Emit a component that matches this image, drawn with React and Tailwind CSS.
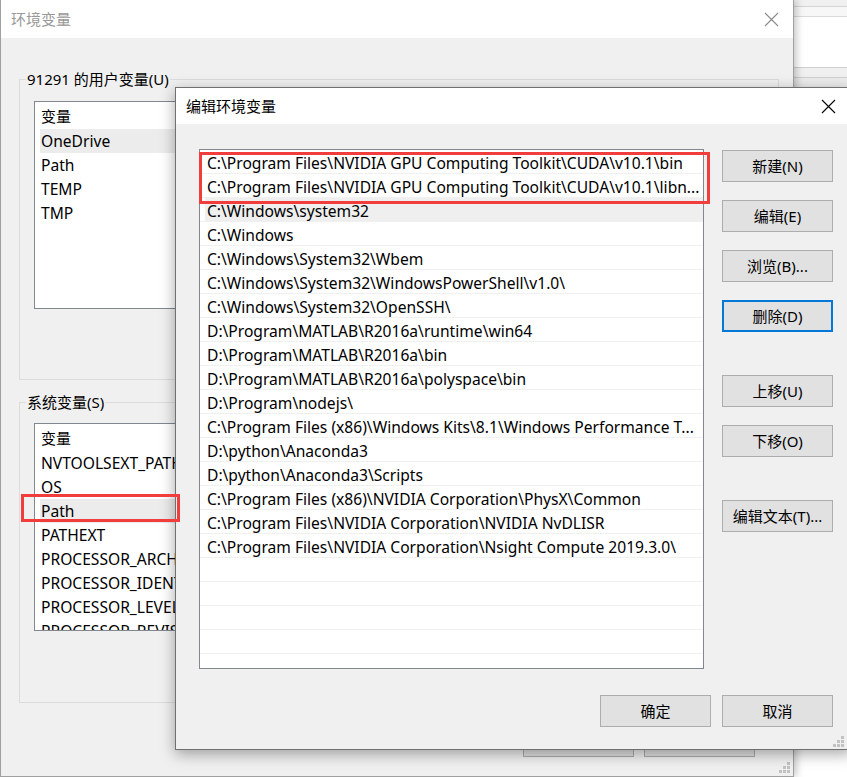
import React from "react";

// 环境变量 / 编辑环境变量 — two stacked Windows dialogs

const USER_VARS = ["OneDrive", "Path", "TEMP", "TMP"];
const SYS_VARS = [
  "NVTOOLSEXT_PATH",
  "OS",
  "Path",
  "PATHEXT",
  "PROCESSOR_ARCHITECTURE",
  "PROCESSOR_IDENTIFIER",
  "PROCESSOR_LEVEL",
  "PROCESSOR_REVISION",
];

const PATHS = [
  "C:\\Program Files\\NVIDIA GPU Computing Toolkit\\CUDA\\v10.1\\bin",
  "C:\\Program Files\\NVIDIA GPU Computing Toolkit\\CUDA\\v10.1\\libn...",
  "C:\\Windows\\system32",
  "C:\\Windows",
  "C:\\Windows\\System32\\Wbem",
  "C:\\Windows\\System32\\WindowsPowerShell\\v1.0\\",
  "C:\\Windows\\System32\\OpenSSH\\",
  "D:\\Program\\MATLAB\\R2016a\\runtime\\win64",
  "D:\\Program\\MATLAB\\R2016a\\bin",
  "D:\\Program\\MATLAB\\R2016a\\polyspace\\bin",
  "D:\\Program\\nodejs\\",
  "C:\\Program Files (x86)\\Windows Kits\\8.1\\Windows Performance T...",
  "D:\\python\\Anaconda3",
  "D:\\python\\Anaconda3\\Scripts",
  "C:\\Program Files (x86)\\NVIDIA Corporation\\PhysX\\Common",
  "C:\\Program Files\\NVIDIA Corporation\\NVIDIA NvDLISR",
  "C:\\Program Files\\NVIDIA Corporation\\Nsight Compute 2019.3.0\\",
  "",
  "",
  "",
  "",
];

function CloseIcon({ color = "#000" }) {
  return (
    <svg width="15" height="15" viewBox="0 0 15 15">
      <path d="M1 1L14 14M14 1L1 14" stroke={color} strokeWidth="1.1" fill="none" />
    </svg>
  );
}

function Grip() {
  const dots = [
    [8, 0],
    [4, 4],
    [8, 4],
    [0, 8],
    [4, 8],
    [8, 8],
  ];
  return (
    <svg width="11" height="11" viewBox="0 0 11 11">
      {dots.map(([x, y]) => (
        <rect key={`${x}-${y}`} x={x} y={y} width="3" height="3" fill="#c2c2c2" />
      ))}
    </svg>
  );
}

function WinButton({ children, focused = false, className = "" }) {
  return (
    <div
      className={`w-[111px] h-[32px] flex items-center justify-center bg-[#e1e1e1] text-[15px] text-black ${
        focused ? "border-2 border-[#0078d7]" : "border border-[#adadad]"
      } ${className}`}
    >
      {children}
    </div>
  );
}

function VarList({ items, selected }) {
  return (
    <div className="w-[729px] h-[208px] bg-white border border-[#828790] overflow-hidden">
      <div className="h-[27px] flex items-center pl-[6px] pt-[1px] text-[15px]">变量</div>
      {items.map((name) => (
        <div
          key={name}
          className={`h-[24px] ml-[5px] pl-[1px] pt-[2px] flex items-center text-[15.6px] whitespace-nowrap ${
            name === selected ? "bg-[#ececec]" : ""
          }`}
        >
          {name}
        </div>
      ))}
    </div>
  );
}

function GroupBox({ label, children, className = "" }) {
  return (
    <div className={`relative ml-[18px] w-[760px] h-[301px] border border-[#dcdcdc] ${className}`}>
      <span className="absolute left-[6px] -top-[11px] px-[1px] bg-[#f0f0f0] text-[15px] leading-[20px] whitespace-nowrap">
        {label}
      </span>
      {children}
    </div>
  );
}

function BackWindow() {
  return (
    <div className="absolute left-0 top-0 w-[794px] h-[777px] flex flex-col border-l border-r border-b border-[#a0a0a0] shadow-[2px_0_8px_rgba(0,0,0,0.25)]">
      <div className="h-[38px] bg-white flex items-center justify-between pl-[10px] pr-[14px] shrink-0">
        <span className="text-[15px] text-[#999]">环境变量</span>
        <CloseIcon color="#8a8a8a" />
      </div>
      <div className="relative flex-1 bg-[#f0f0f0] flex flex-col">
        <GroupBox label="91291 的用户变量(U)" className="mt-[41px]">
          <div className="ml-[14px] mt-[21px]">
            <VarList items={USER_VARS} selected="OneDrive" />
          </div>
        </GroupBox>
        <GroupBox label="系统变量(S)" className="mt-[22px]">
          <div className="ml-[14px] mt-[20px]">
            <VarList items={SYS_VARS} selected="Path" />
          </div>
        </GroupBox>
        <div className="flex gap-[10px] ml-[522px] mt-[22px]">
          <WinButton>确定</WinButton>
          <WinButton>取消</WinButton>
        </div>
        <div className="absolute right-[3px] bottom-[3px]">
          <Grip />
        </div>
      </div>
    </div>
  );
}

function EditDialog() {
  return (
    <div className="absolute left-[175px] top-[87px] w-[677px] h-[663px] flex flex-col border border-[#707070] shadow-[0_4px_14px_rgba(0,0,0,0.35)]">
      <div className="h-[36px] bg-white flex items-center justify-between pl-[10px] pr-[15px] shrink-0">
        <span className="text-[15px] text-black">编辑环境变量</span>
        <CloseIcon />
      </div>
      <div className="relative flex-1 bg-[#f0f0f0] flex flex-col">
        <div className="flex">
          <div className="ml-[23px] mt-[25px] w-[505px] h-[520px] bg-white border border-[#828790] overflow-hidden">
            {PATHS.map((p, i) => (
              <div key={i} className="h-[24px] border-b border-[#f0f0f0]">
                <div
                  className={`h-full ml-[5px] pl-[2px] pt-[5px] flex items-center text-[15.6px] whitespace-nowrap overflow-hidden ${
                    i === 2 ? "bg-[#efefef]" : ""
                  }`}
                >
                  {p}
                </div>
              </div>
            ))}
          </div>
          <div className="ml-[18px] mt-[26px] flex flex-col">
            <WinButton>新建(N)</WinButton>
            <WinButton className="mt-[18px]">编辑(E)</WinButton>
            <WinButton className="mt-[18px]">浏览(B)...</WinButton>
            <WinButton focused className="mt-[18px]">删除(D)</WinButton>
            <WinButton className="mt-[43px]">上移(U)</WinButton>
            <WinButton className="mt-[18px]">下移(O)</WinButton>
            <WinButton className="mt-[43px]">编辑文本(T)...</WinButton>
          </div>
        </div>
        <div className="flex gap-[11px] ml-[424px] mt-[26px]">
          <WinButton>确定</WinButton>
          <WinButton>取消</WinButton>
        </div>
        <div className="absolute right-[7px] bottom-[2px]">
          <Grip />
        </div>
      </div>
    </div>
  );
}

function SideWindow() {
  return (
    <div className="absolute left-[794px] top-0 w-[53px] h-[88px] flex flex-col bg-[#f0f0f0]">
      <div className="h-[6px]" />
      <div className="h-[1px] bg-[#d4d4d4]" />
      <div className="h-[9px] bg-[#f7f7f7]" />
      <div className="h-[51px] bg-white border-t border-[#dadada]" />
      <div className="h-[1px] bg-[#cfcfcf]" />
      <div className="h-[9px] bg-[#f0f0f0]" />
      <div className="h-[1px] bg-[#cfcfcf]" />
      <div className="flex-1 bg-[#ececec]" />
    </div>
  );
}

export default function App() {
  return (
    <div className="relative w-[847px] h-[777px] overflow-hidden bg-white text-black font-['Noto_Sans','Noto_Sans_CJK_SC',sans-serif]">
      <SideWindow />
      <BackWindow />
      <EditDialog />

      {/* annotations drawn over the screenshot */}
      <div className="absolute left-[199px] top-[152px] w-[511px] h-[52px] border-[3px] border-[#f23d3d]" />
      <div className="absolute left-[21px] top-[494px] w-[159px] h-[28px] border-[3px] border-[#f23d3d]" />
    </div>
  );
}
